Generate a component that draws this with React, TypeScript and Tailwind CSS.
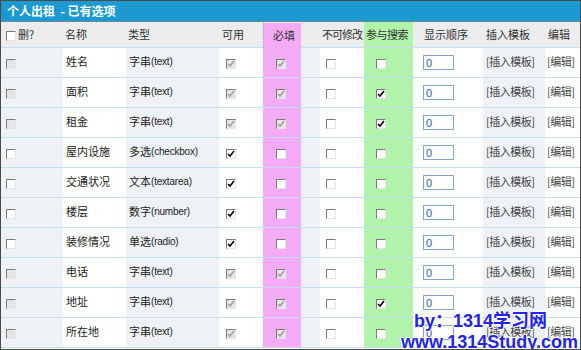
import React from 'react';

type Row = {
  name: string;
  kind: string;
  en: string;
  locked: boolean; // 系统字段：删/可用/必填 不可改
  search: boolean;
};

const rows: Row[] = [
  { name: '姓名', kind: '字串', en: '(text)', locked: true, search: false },
  { name: '面积', kind: '字串', en: '(text)', locked: true, search: true },
  { name: '租金', kind: '字串', en: '(text)', locked: true, search: true },
  { name: '屋内设施', kind: '多选', en: '(checkbox)', locked: false, search: false },
  { name: '交通状况', kind: '文本', en: '(textarea)', locked: false, search: false },
  { name: '楼层', kind: '数字', en: '(number)', locked: false, search: false },
  { name: '装修情况', kind: '单选', en: '(radio)', locked: false, search: false },
  { name: '电话', kind: '字串', en: '(text)', locked: true, search: false },
  { name: '地址', kind: '字串', en: '(text)', locked: true, search: true },
  { name: '所在地', kind: '字串', en: '(text)', locked: true, search: false },
];

const Box: React.FC<{ checked?: boolean; disabled?: boolean }> = ({ checked, disabled }) => (
  <span
    className={
      'mt-[3px] inline-flex h-[10px] w-[10px] shrink-0 items-center justify-center border border-t-[#7a7a7a] border-l-[#7a7a7a] border-r-[#e4e4e4] border-b-[#e4e4e4] ' +
      (disabled ? 'bg-[#e6e6e6]' : 'bg-white')
    }
  >
    {checked && (
      <svg width="8" height="8" viewBox="0 0 8 8">
        <polyline
          points="1,4 3,6 7,1"
          fill="none"
          stroke={disabled ? '#a0a0a0' : '#000'}
          strokeWidth="1.6"
        />
      </svg>
    )}
  </span>
);

const cell = 'flex h-full items-center whitespace-nowrap';

export default function App() {
  return (
    <div
      className="relative h-[350px] w-[581px] overflow-hidden border border-[#4a4a4a] bg-white text-[11px] text-[#222]"
      style={{ fontFamily: '"Noto Sans CJK SC", "Liberation Sans", sans-serif' }}
    >
      {/* title */}
      <div className="flex h-[21px] items-center border-b border-[#6c8a96] bg-[#1a9ad0] pl-[6px] text-[12px] font-bold text-white">
        个人出租 &nbsp;- 已有选项
      </div>

      {/* header */}
      <div className="flex h-[26px] border-b border-[#c6def2] bg-[#ececec] text-[#333]">
        <div className={`${cell} w-[62px] gap-[2px] pl-[5px]`}>
          <Box />
          <span>删?</span>
        </div>
        <div className={`${cell} w-[63px] pl-[2px]`}>名称</div>
        <div className={`${cell} w-[93px] pl-[2px]`}>类型</div>
        <div className={`${cell} w-[44px] pl-[3px]`}>可用</div>
        <div className={`${cell} mt-[1px] w-[38px] border-l border-dotted border-[#b0a0b0] bg-[#f4aaf4] pl-[9px]`}>必填</div>
        <div className={`${cell} w-[63px] pl-[21px] tracking-[-1px]`}>不可修改</div>
        <div className={`${cell} w-[49px] bg-[#b2f3ab] pl-[2px] tracking-[-0.5px]`}>参与搜索</div>
        <div className={`${cell} w-[70px] pl-[11px]`}>显示顺序</div>
        <div className={`${cell} w-[62px] pl-[3px]`}>插入模板</div>
        <div className={`${cell} flex-1 pl-[3px]`}>编辑</div>
      </div>

      {/* rows */}
      {rows.map((r) => (
        <div key={r.name} className="flex h-[30px] border-b border-[#c6def2]">
          <div className={`${cell} w-[62px] bg-[#eef2f6] pl-[5px]`}>
            <Box disabled={r.locked} />
          </div>
          <div className={`${cell} w-[63px] pb-[3px] pl-[3px]`}>{r.name}</div>
          <div className={`${cell} w-[93px] bg-[#eef2f6] pb-[3px] pl-[3px]`}>
            {r.kind}
            <span className="text-[10px] tracking-[-0.2px]" style={{ fontFamily: '"Liberation Sans", sans-serif' }}>
              {r.en}
            </span>
          </div>
          <div className={`${cell} w-[44px] pl-[7px]`}>
            <Box checked disabled={r.locked} />
          </div>
          <div className={`${cell} w-[38px] bg-[#f4aaf4] pl-[13px]`}>
            <Box checked={r.locked} disabled={r.locked} />
          </div>
          <div className="flex h-full w-[63px]">
            <div className="h-full w-[19px] bg-[#eef2f6]" />
            <div className={`${cell} flex-1 pl-[6px]`}>
              <Box />
            </div>
          </div>
          <div className={`${cell} w-[49px] bg-[#b2f3ab] pl-[12px]`}>
            <Box checked={r.search} />
          </div>
          <div className={`${cell} w-[70px] pl-[10px]`}>
            <input
              defaultValue="0"
              className="h-[15px] w-[31px] border border-[#7fa6cc] bg-white px-[2px] text-[11px] leading-none text-[#1c5fb8] outline-none"
              style={{ fontFamily: '"Liberation Sans", sans-serif' }}
            />
          </div>
          <div className={`${cell} w-[62px] bg-[#eef2f6] pb-[3px] pl-[3px] tracking-[-0.5px] text-[#444]`}>[插入模板]</div>
          <div className={`${cell} flex-1 pb-[3px] pl-[2px] tracking-[-0.5px] text-[#444]`}>[编辑]</div>
        </div>
      ))}

      {/* watermark */}
      <div
        className="absolute right-[2px] bottom-[-4px] text-right text-[18px] font-bold leading-[21px] text-[#2424e6] [text-shadow:1px_0_#fff,-1px_0_#fff,0_1px_#fff,0_-1px_#fff]"
        style={{ fontFamily: '"Liberation Sans", "Noto Sans CJK SC", sans-serif' }}
      >
        <div className="pr-[31px]">by：1314学习网</div>
        <div>www.1314Study.com</div>
      </div>
    </div>
  );
}
